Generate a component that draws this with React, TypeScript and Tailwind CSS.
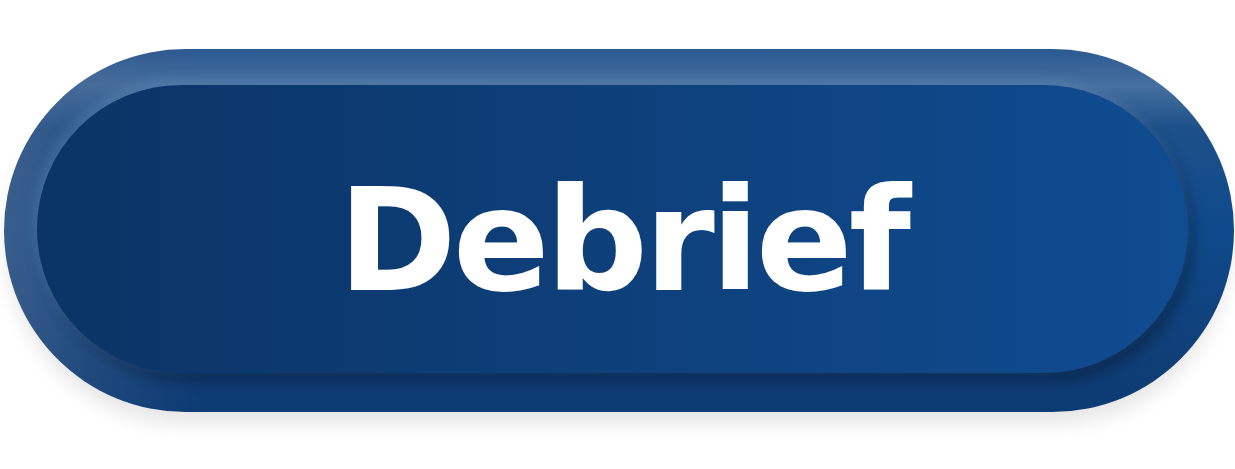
export default function App() {
  return (
    <div className="h-[469px] w-[1235px] overflow-hidden bg-white">
      <div
        className="ml-[4px] mt-[49px] flex h-[363px] w-[1230px] rounded-full pb-[39px] pl-[33px] pr-[46px] pt-[36px] shadow-[0_16px_20px_-4px_rgba(0,0,0,0.1)]"
        style={{
          background:
            'linear-gradient(90deg, rgba(70,100,140,0.75) 0%, rgba(70,100,140,0.35) 6%, rgba(70,100,140,0) 16%), linear-gradient(180deg, #2b5990 0%, #4670a0 10%, #1c5089 22%, #0f4a8c 50%, #103f78 84%, #0c3a73 100%)',
        }}
      >
        <div className="flex flex-1 items-center justify-center rounded-full bg-gradient-to-r from-[#0b3465] to-[#104c91] pl-[20px] pt-[22px] shadow-[-3px_-5px_12px_rgba(110,150,195,0.35),7px_9px_14px_rgba(0,0,0,0.28)]">
          <span className="font-['DejaVu_Sans',sans-serif] text-[143px] font-bold leading-none tracking-[-4px] text-white">
            Debrief
          </span>
        </div>
      </div>
    </div>
  );
}
